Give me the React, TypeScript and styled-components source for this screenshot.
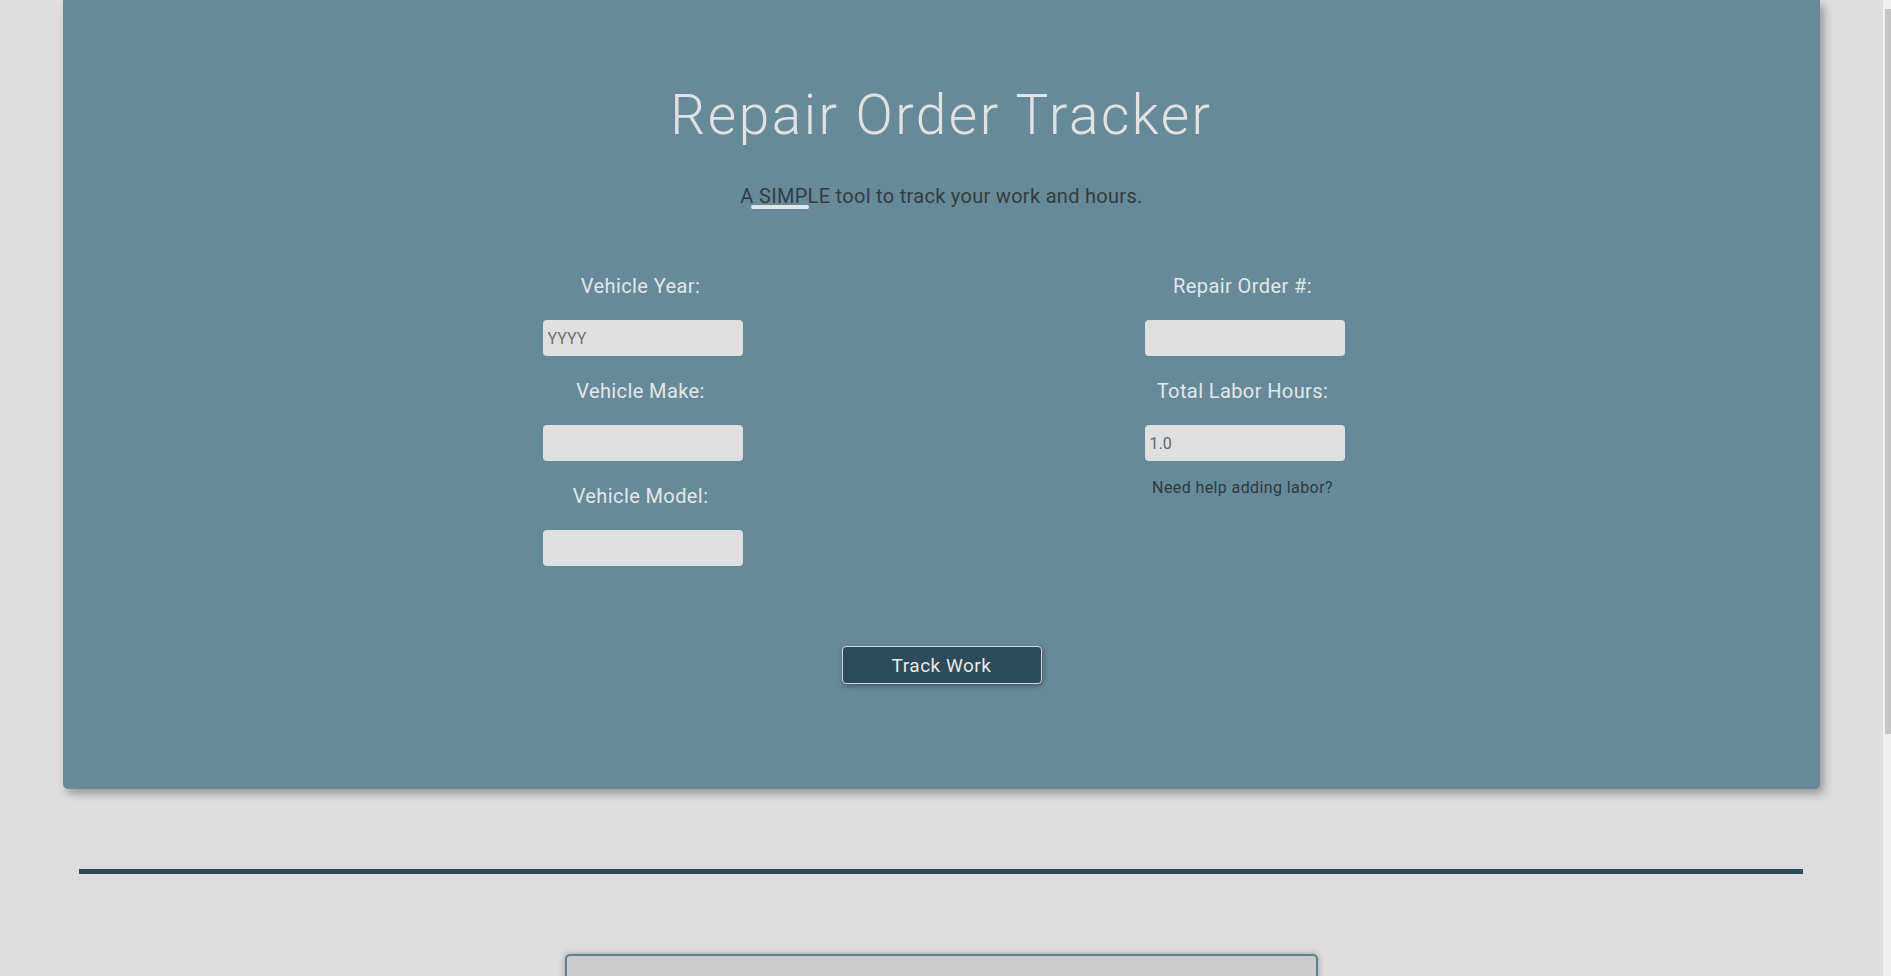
import styled, { createGlobalStyle } from "styled-components";

const GlobalStyle = createGlobalStyle`
  html, body {
    margin: 0;
    padding: 0;
    height: 976px;
    overflow: hidden;
    background-color: #dddddd;
    font-family: Roboto, "Liberation Sans", sans-serif;
  }
`;

const Shell = styled.div`
  display: flex;
  height: 976px;
`;

const Page = styled.main`
  flex: 1;
  min-width: 0;
  display: flex;
  flex-direction: column;

  & > * {
    flex-shrink: 0;
  }
`;

const ScrollRail = styled.div`
  width: 8px;
  background-color: #f0f0f0;
  padding: 9px 0 0 2px;
  box-sizing: border-box;
`;

const ScrollThumb = styled.div`
  height: 725px;
  background-color: #c4c4c4;
`;

const HeroCard = styled.section`
  margin: 0 63px;
  padding: 88px 0 105px;
  background-color: #668a99;
  border-radius: 0 0 5px 5px;
  box-shadow: 4px 5px 8px rgba(0, 0, 0, 0.3);
  display: flex;
  flex-direction: column;
  align-items: center;
`;

const Title = styled.h1`
  margin: 0;
  font-size: 55px;
  line-height: 1;
  font-weight: 300;
  letter-spacing: 2.5px;
  color: #e1e1e1;
`;

const Tagline = styled.p`
  margin: 43px 0 0;
  font-size: 20px;
  line-height: 1;
  letter-spacing: 0.3px;
  color: #343d42;
`;

const Emphasis = styled.span`
  position: relative;

  &::after {
    content: "";
    position: absolute;
    left: -3px;
    top: 21px;
    width: 58px;
    height: 4px;
    border-radius: 2px;
    background-color: #e4e4e4;
  }
`;

const FieldGrid = styled.div`
  margin-top: 70px;
  width: 1204px;
  display: grid;
  grid-template-columns: 1fr 1fr;
`;

const FieldColumn = styled.div`
  display: flex;
  flex-direction: column;
  align-items: center;
`;

const FieldLabel = styled.label`
  font-size: 20px;
  line-height: 1;
  letter-spacing: 0.4px;
  color: #e3e6e8;
  margin-bottom: 24px;
`;

const FieldInput = styled.input`
  width: 200px;
  height: 36px;
  box-sizing: border-box;
  margin: 0 0 25px 4px;
  padding: 0 5px;
  border: none;
  border-radius: 4px;
  background-color: #dfdfdf;
  font-family: Roboto, "Liberation Sans", sans-serif;
  font-size: 16px;
  color: #666;
  outline: none;

  &::placeholder {
    color: #6f6f6f;
  }
`;

const HelpLink = styled.a`
  margin-top: -6px;
  font-size: 16px;
  line-height: 1;
  letter-spacing: 0.4px;
  color: #2f3a40;
  text-decoration: none;
  cursor: pointer;
`;

const TrackButton = styled.button`
  margin-top: 55px;
  width: 200px;
  height: 38px;
  background-color: #2c4b5b;
  color: #e6e9eb;
  border: 1px solid #d4d8da;
  border-radius: 4px;
  box-shadow: 1px 2px 5px rgba(0, 0, 0, 0.35);
  font-family: Roboto, "Liberation Sans", sans-serif;
  font-size: 19px;
  letter-spacing: 0.5px;
  cursor: pointer;
`;

const Divider = styled.hr`
  margin: 80px 80px 0 79px;
  height: 5px;
  border: none;
  background-color: #2c4b5b;
`;

const LogPanel = styled.section`
  margin: 80px auto 0;
  width: 753px;
  height: 300px;
  box-sizing: border-box;
  border: 2px solid #5f8190;
  border-radius: 5px;
  background-color: #cbcbcb;
  box-shadow: 0 0 6px rgba(0, 0, 0, 0.3);
`;

type Field = { label: string; placeholder?: string; value?: string };

const vehicleFields: Field[] = [
  { label: "Vehicle Year:", placeholder: "YYYY" },
  { label: "Vehicle Make:" },
  { label: "Vehicle Model:" },
];

const orderFields: Field[] = [
  { label: "Repair Order #:" },
  { label: "Total Labor Hours:", value: "1.0" },
];

function FieldGroup({ field }: { field: Field }) {
  return (
    <>
      <FieldLabel>{field.label}</FieldLabel>
      <FieldInput placeholder={field.placeholder} defaultValue={field.value} />
    </>
  );
}

function App() {
  return (
    <Shell>
      <GlobalStyle />
      <Page>
        <HeroCard>
          <Title>Repair Order Tracker</Title>
          <Tagline>
            A<Emphasis> SIMPLE</Emphasis> tool to track your work and hours.
          </Tagline>
          <FieldGrid>
            <FieldColumn>
              {vehicleFields.map((f) => (
                <FieldGroup key={f.label} field={f} />
              ))}
            </FieldColumn>
            <FieldColumn>
              {orderFields.map((f) => (
                <FieldGroup key={f.label} field={f} />
              ))}
              <HelpLink>Need help adding labor?</HelpLink>
            </FieldColumn>
          </FieldGrid>
          <TrackButton>Track Work</TrackButton>
        </HeroCard>
        <Divider />
        <LogPanel />
      </Page>
      <ScrollRail>
        <ScrollThumb />
      </ScrollRail>
    </Shell>
  );
}

export default App;
